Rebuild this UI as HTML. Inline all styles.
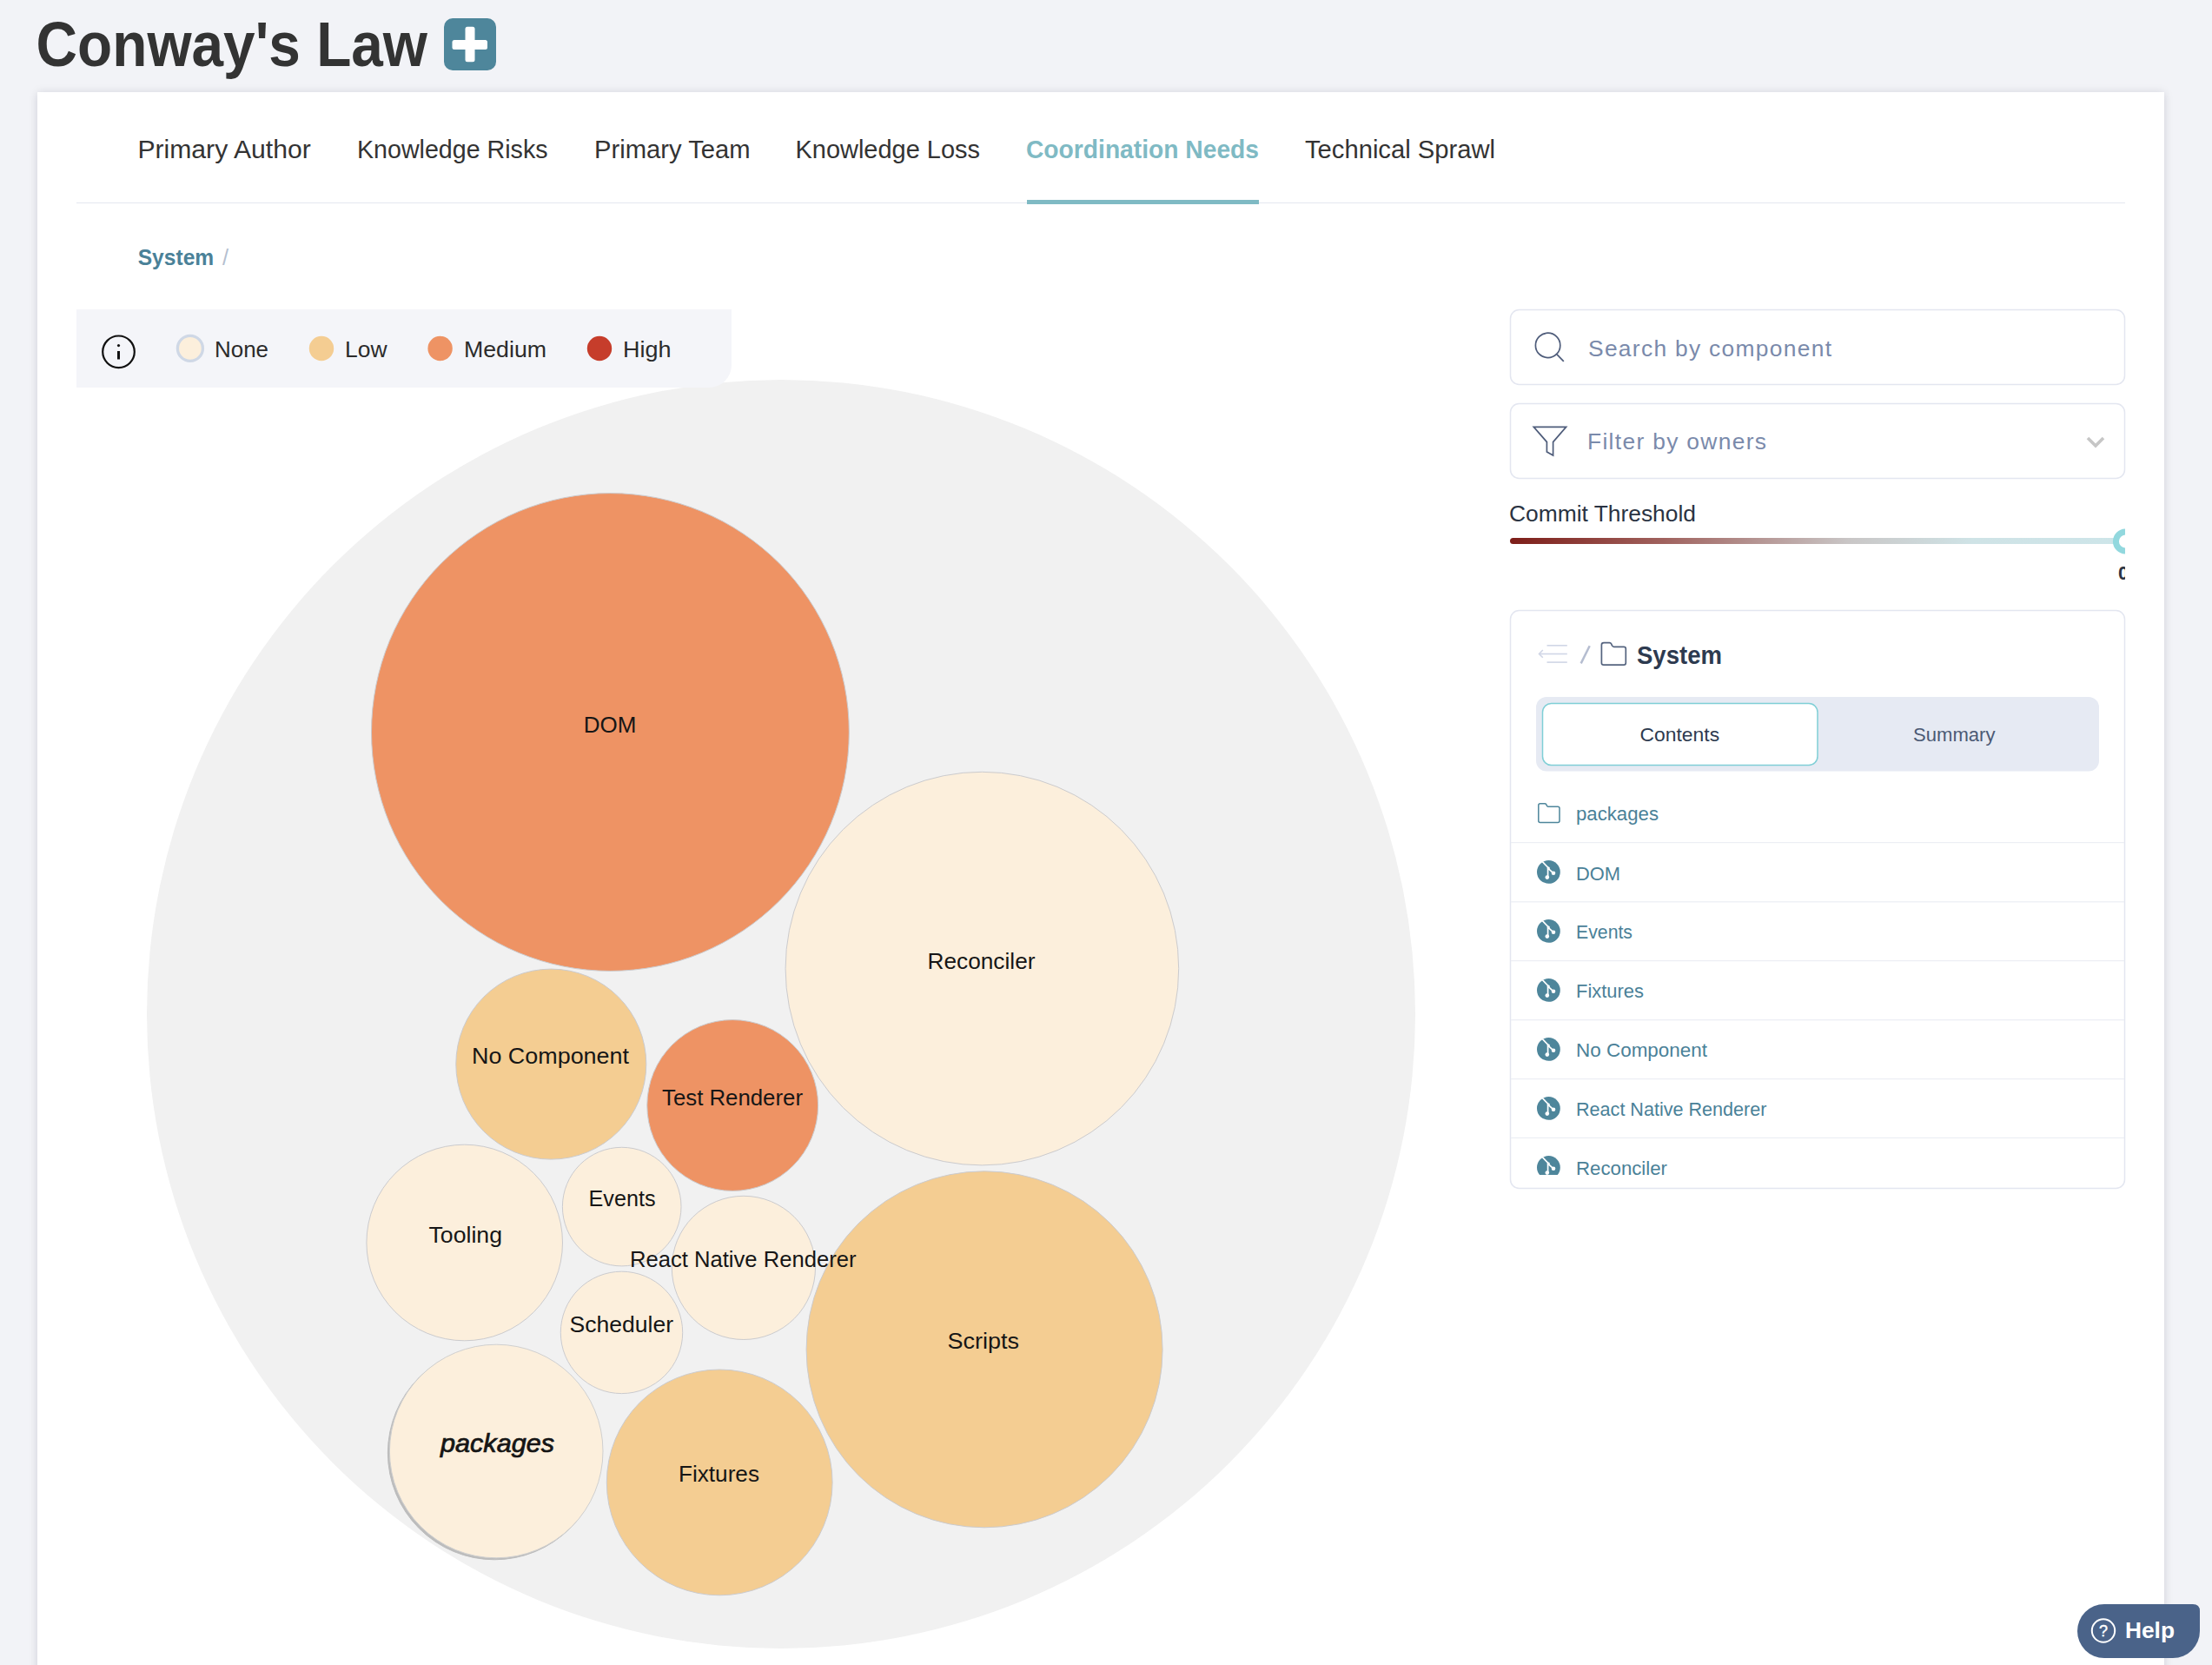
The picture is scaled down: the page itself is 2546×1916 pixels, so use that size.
<!DOCTYPE html>
<html><head><meta charset="utf-8"><title>Conway's Law</title>
<style>
html,body{margin:0;padding:0;width:2546px;height:1916px;overflow:hidden;background:#f2f3f7;font-family:"Liberation Sans",sans-serif;}
.card{position:absolute;left:43px;top:106px;width:2448px;height:1900px;background:#fff;box-shadow:0 1px 10px rgba(10,15,40,.15);}
svg{position:absolute;left:0;top:0;}
</style></head><body>
<div class="card"></div>
<svg width="2546" height="1916" viewBox="0 0 2546 1916" font-family="Liberation Sans, sans-serif">
<defs>
  <linearGradient id="trk" x1="0" x2="1" y1="0" y2="0">
    <stop offset="0" stop-color="#7d1d18"/>
    <stop offset="0.25" stop-color="#a0625e"/>
    <stop offset="0.55" stop-color="#c9c6c6"/>
    <stop offset="0.75" stop-color="#cfe3e6"/>
    <stop offset="1" stop-color="#cde5e9"/>
  </linearGradient>
  <clipPath id="rclip"><rect x="1700" y="560" width="746" height="120"/></clipPath>
  <clipPath id="listclip"><rect x="1738" y="900" width="708" height="452"/></clipPath>
  <filter id="pshadow" x="-10%" y="-10%" width="120%" height="120%">
    <feDropShadow dx="-2" dy="2" stdDeviation="0.5" flood-color="#bcbcbc" flood-opacity="1"/>
  </filter>
</defs>

<!-- Title -->
<text x="41.6" y="76.2" font-size="72.7" font-weight="700" fill="#333333" textLength="450.4" lengthAdjust="spacingAndGlyphs">Conway's Law</text>
<rect x="511" y="21" width="60" height="60" rx="10" fill="#4e869b"/>
<rect x="520.5" y="46" width="40.5" height="11" rx="2.5" fill="#fff"/>
<rect x="535.5" y="30.7" width="11" height="40.5" rx="2.5" fill="#fff"/>

<!-- Tabs -->
<g font-size="28.8" fill="#333333">
  <text x="158.4" y="182" textLength="199.4" lengthAdjust="spacingAndGlyphs">Primary Author</text>
  <text x="411.0" y="182" textLength="219.5" lengthAdjust="spacingAndGlyphs">Knowledge Risks</text>
  <text x="684.0" y="182" textLength="179.6" lengthAdjust="spacingAndGlyphs">Primary Team</text>
  <text x="915.5" y="182" textLength="212.5" lengthAdjust="spacingAndGlyphs">Knowledge Loss</text>
  <text x="1181.0" y="182" textLength="268.0" lengthAdjust="spacingAndGlyphs" font-weight="700" fill="#7fbac4">Coordination Needs</text>
  <text x="1502.0" y="182" textLength="219.0" lengthAdjust="spacingAndGlyphs">Technical Sprawl</text>
</g>
<rect x="88" y="233" width="2358" height="1" fill="#e4e8f0"/>
<rect x="1182" y="230" width="267" height="5" fill="#7fbac4"/>

<!-- Breadcrumb -->
<text x="158.7" y="304.7" font-size="25.4" font-weight="700" fill="#4a8198" textLength="87.5" lengthAdjust="spacingAndGlyphs">System</text>
<text x="256.0" y="304.7" font-size="25.4" fill="#b5bfd0">/</text>

<!-- Chart -->
<circle cx="899" cy="1167" r="730" fill="#f1f1f1"/>
<g stroke="#cbcbce" stroke-width="1">
  <circle cx="702.4" cy="842.5" r="274.9" fill="#ee9364"/>
  <circle cx="1130.4" cy="1114.6" r="226.3" fill="#fcefdc"/>
  <circle cx="634.3" cy="1224.6" r="109.5" fill="#f4cd92"/>
  <circle cx="843.2" cy="1272" r="98.4" fill="#ee9364"/>
  <circle cx="534.7" cy="1430" r="112.8" fill="#fcefdc"/>
  <circle cx="715.7" cy="1388.6" r="68.3" fill="#fcefdc"/>
  <circle cx="855.9" cy="1458.9" r="82.6" fill="#fcefdc"/>
  <circle cx="715.5" cy="1533.4" r="70.2" fill="#fcefdc"/>
  <circle cx="828.2" cy="1705.9" r="129.9" fill="#f4cd92"/>
  <circle cx="1133.1" cy="1552.8" r="205" fill="#f4cd92"/>
  <circle cx="571.2" cy="1670" r="122.8" fill="#fcefdc" stroke="#cfcfcf" stroke-width="1" filter="url(#pshadow)"/>
</g>
<g font-size="26.5" fill="#161616">
  <text x="671.7" y="842.8" textLength="60.6" lengthAdjust="spacingAndGlyphs">DOM</text>
  <text x="1067.5" y="1115.3" textLength="124.0" lengthAdjust="spacingAndGlyphs">Reconciler</text>
  <text x="543.0" y="1224.4" textLength="181.0" lengthAdjust="spacingAndGlyphs">No Component</text>
  <text x="762.0" y="1271.5" textLength="162.0" lengthAdjust="spacingAndGlyphs">Test Renderer</text>
  <text x="677.5" y="1388.3" textLength="77.0" lengthAdjust="spacingAndGlyphs">Events</text>
  <text x="725.0" y="1458.2" textLength="260.5" lengthAdjust="spacingAndGlyphs">React Native Renderer</text>
  <text x="493.5" y="1429.8" textLength="84.5" lengthAdjust="spacingAndGlyphs">Tooling</text>
  <text x="655.5" y="1533.3" textLength="119.5" lengthAdjust="spacingAndGlyphs">Scheduler</text>
  <text x="781.0" y="1704.8" textLength="93.0" lengthAdjust="spacingAndGlyphs">Fixtures</text>
  <text x="1090.5" y="1552.3" textLength="82.5" lengthAdjust="spacingAndGlyphs">Scripts</text>
  <text x="507.0" y="1670.6" font-size="30" font-weight="400" font-style="italic" stroke="#111" stroke-width="0.7" textLength="131.0" lengthAdjust="spacingAndGlyphs">packages</text>
</g>

<!-- Legend -->
<path d="M88 356 H842 V420 A26 26 0 0 1 816 446 H88 Z" fill="#f4f5f9"/>
<circle cx="136.5" cy="404.8" r="18.3" fill="none" stroke="#111" stroke-width="2.2"/>
<circle cx="136.5" cy="397.6" r="1.6" fill="#111"/>
<rect x="135" y="404" width="3" height="9.5" fill="#111"/>
<circle cx="218.9" cy="400.9" r="14.5" fill="#fcefdc" stroke="#cfd8e6" stroke-width="3.3"/>
<circle cx="370" cy="401" r="14.2" fill="#f4cd92"/>
<circle cx="506.6" cy="401" r="14.2" fill="#ee9364"/>
<circle cx="690" cy="401" r="14.2" fill="#c63d2b"/>
<g font-size="25" fill="#2b2b2b">
  <text x="247.0" y="411" textLength="62.0" lengthAdjust="spacingAndGlyphs">None</text>
  <text x="397.0" y="411" textLength="48.5" lengthAdjust="spacingAndGlyphs">Low</text>
  <text x="534.0" y="411" textLength="95.0" lengthAdjust="spacingAndGlyphs">Medium</text>
  <text x="717.0" y="411" textLength="55.5" lengthAdjust="spacingAndGlyphs">High</text>
</g>

<!-- Right panel: search -->
<rect x="1738.5" y="356.5" width="707" height="86" rx="10" fill="#fff" stroke="#e3e6f0" stroke-width="1.5"/>
<circle cx="1781.6" cy="397.4" r="14.2" fill="none" stroke="#4e5c7a" stroke-width="1.7"/>
<line x1="1791.8" y1="407.6" x2="1799.8" y2="415.9" stroke="#4e5c7a" stroke-width="1.7"/>
<text x="1828.0" y="409.9" font-size="26.4" fill="#7a8aab" textLength="280.0" lengthAdjust="spacing">Search by component</text>

<rect x="1738.5" y="464.5" width="707" height="86" rx="10" fill="#fff" stroke="#e3e6f0" stroke-width="1.5"/>
<path d="M1765.3 491.4 H1802.6 L1787.6 508.6 V524 L1780.4 520 V508.6 Z" fill="none" stroke="#4e5c7a" stroke-width="1.7" stroke-linejoin="miter"/>
<text x="1827.0" y="517.4" font-size="26.4" fill="#7a8aab" textLength="206.0" lengthAdjust="spacing">Filter by owners</text>
<polyline points="2403,504 2412,513 2421,504" fill="none" stroke="#c6c6c6" stroke-width="3.6"/>

<text x="1737.0" y="599.9" font-size="25.4" fill="#2a3342" textLength="215.0" lengthAdjust="spacingAndGlyphs">Commit Threshold</text>
<rect x="1738" y="619" width="708" height="7" rx="3.5" fill="url(#trk)"/>
<g clip-path="url(#rclip)">
  <circle cx="2446.5" cy="623" r="11.1" fill="#fff" stroke="#92d8de" stroke-width="7"/>
  <text x="2438" y="667" font-size="22" font-weight="700" fill="#2a3342">0</text>
</g>

<!-- Tree panel -->
<rect x="1738.5" y="702.5" width="707" height="665" rx="10" fill="#fff" stroke="#e3e6f0" stroke-width="1.5"/>
<g stroke="#d0d6e6" stroke-width="1.6" fill="none">
  <line x1="1780.5" y1="742.8" x2="1803.8" y2="742.8"/>
  <line x1="1772" y1="752.5" x2="1803.8" y2="752.5"/>
  <line x1="1780.5" y1="762.1" x2="1803.8" y2="762.1"/>
  <polyline points="1775.8,748 1771.5,752.5 1775.8,756.8"/>
</g>
<line x1="1829.7" y1="743.3" x2="1819.7" y2="763.4" stroke="#b5bdd0" stroke-width="2.5"/>
<path d="M1843.4 763 V742 Q1843.4 739.6 1846 739.6 H1852.5 Q1854 739.6 1854.6 741 L1855.6 743 Q1856.2 744.3 1857.6 744.3 H1869 Q1871.3 744.3 1871.3 746.6 V762.8 Q1871.3 765.2 1869 765.2 H1845.8 Q1843.4 765.2 1843.4 763 Z" fill="none" stroke="#55647f" stroke-width="1.7"/>
<text x="1884.0" y="764" font-size="29" font-weight="700" fill="#2d3a4f" textLength="98.0" lengthAdjust="spacingAndGlyphs">System</text>

<rect x="1768" y="802" width="648" height="85.4" rx="12" fill="#e6eaf3"/>
<rect x="1775.5" y="809.5" width="316.5" height="71" rx="10" fill="#fff" stroke="#7fcfd6" stroke-width="1.5"/>
<text x="1887.5" y="852.8" font-size="22" fill="#2d3a4f" textLength="91.6" lengthAdjust="spacingAndGlyphs">Contents</text>
<text x="2202.0" y="852.8" font-size="22" fill="#4c5a75" textLength="94.5" lengthAdjust="spacingAndGlyphs">Summary</text>

<!-- list -->
<path d="M1770.8 944.5 V926.8 Q1770.8 924.7 1772.8 924.7 H1778 Q1779.2 924.7 1779.8 925.8 L1780.6 927.3 Q1781.1 928.3 1782.2 928.3 H1793 Q1795 928.3 1795 930.3 V944.5 Q1795 946.5 1793 946.5 H1772.8 Q1770.8 946.5 1770.8 944.5 Z" fill="none" stroke="#4e869b" stroke-width="1.5"/>
<text x="1814.0" y="944.3" font-size="22.2" fill="#4a8198" textLength="95.0" lengthAdjust="spacingAndGlyphs">packages</text>
<g fill="#eceef4">
  <rect x="1739" y="969" width="706" height="1.2"/>
  <rect x="1739" y="1037.2" width="706" height="1.2"/>
  <rect x="1739" y="1105" width="706" height="1.2"/>
  <rect x="1739" y="1173.1" width="706" height="1.2"/>
  <rect x="1739" y="1241" width="706" height="1.2"/>
  <rect x="1739" y="1308.8" width="706" height="1.2"/>
</g>
<g clip-path="url(#listclip)">
  <g>
    <circle cx="1782.4" cy="1003.4" r="13.4" fill="#4e869b"/>
    <path d="M1775.2 991.4 L1781.6 998.2 V1009 M1782 999.4 L1788 1004.8" stroke="#fff" stroke-width="1.7" fill="none"/>
    <circle cx="1782.3" cy="999" r="1.6" fill="#fff"/>
    <circle cx="1780.8" cy="1009.6" r="2.3" fill="#fff"/>
    <circle cx="1788" cy="1004.8" r="2.3" fill="#fff"/>
  </g>
  <g transform="translate(0,68)">
    <circle cx="1782.4" cy="1003.4" r="13.4" fill="#4e869b"/>
    <path d="M1775.2 991.4 L1781.6 998.2 V1009 M1782 999.4 L1788 1004.8" stroke="#fff" stroke-width="1.7" fill="none"/>
    <circle cx="1782.3" cy="999" r="1.6" fill="#fff"/>
    <circle cx="1780.8" cy="1009.6" r="2.3" fill="#fff"/>
    <circle cx="1788" cy="1004.8" r="2.3" fill="#fff"/>
  </g>
  <g transform="translate(0,136)">
    <circle cx="1782.4" cy="1003.4" r="13.4" fill="#4e869b"/>
    <path d="M1775.2 991.4 L1781.6 998.2 V1009 M1782 999.4 L1788 1004.8" stroke="#fff" stroke-width="1.7" fill="none"/>
    <circle cx="1782.3" cy="999" r="1.6" fill="#fff"/>
    <circle cx="1780.8" cy="1009.6" r="2.3" fill="#fff"/>
    <circle cx="1788" cy="1004.8" r="2.3" fill="#fff"/>
  </g>
  <g transform="translate(0,204)">
    <circle cx="1782.4" cy="1003.4" r="13.4" fill="#4e869b"/>
    <path d="M1775.2 991.4 L1781.6 998.2 V1009 M1782 999.4 L1788 1004.8" stroke="#fff" stroke-width="1.7" fill="none"/>
    <circle cx="1782.3" cy="999" r="1.6" fill="#fff"/>
    <circle cx="1780.8" cy="1009.6" r="2.3" fill="#fff"/>
    <circle cx="1788" cy="1004.8" r="2.3" fill="#fff"/>
  </g>
  <g transform="translate(0,272)">
    <circle cx="1782.4" cy="1003.4" r="13.4" fill="#4e869b"/>
    <path d="M1775.2 991.4 L1781.6 998.2 V1009 M1782 999.4 L1788 1004.8" stroke="#fff" stroke-width="1.7" fill="none"/>
    <circle cx="1782.3" cy="999" r="1.6" fill="#fff"/>
    <circle cx="1780.8" cy="1009.6" r="2.3" fill="#fff"/>
    <circle cx="1788" cy="1004.8" r="2.3" fill="#fff"/>
  </g>
  <g transform="translate(0,340)">
    <circle cx="1782.4" cy="1003.4" r="13.4" fill="#4e869b"/>
    <path d="M1775.2 991.4 L1781.6 998.2 V1009 M1782 999.4 L1788 1004.8" stroke="#fff" stroke-width="1.7" fill="none"/>
    <circle cx="1782.3" cy="999" r="1.6" fill="#fff"/>
    <circle cx="1780.8" cy="1009.6" r="2.3" fill="#fff"/>
    <circle cx="1788" cy="1004.8" r="2.3" fill="#fff"/>
  </g>
  <g font-size="22.2" fill="#4a8198">
    <text x="1814.0" y="1012.6" textLength="51.0" lengthAdjust="spacingAndGlyphs">DOM</text>
    <text x="1814.0" y="1080.4" textLength="65.0" lengthAdjust="spacingAndGlyphs">Events</text>
    <text x="1814.0" y="1148.2" textLength="78.0" lengthAdjust="spacingAndGlyphs">Fixtures</text>
    <text x="1814.0" y="1216" textLength="151.0" lengthAdjust="spacingAndGlyphs">No Component</text>
    <text x="1814.0" y="1283.8" textLength="219.5" lengthAdjust="spacingAndGlyphs">React Native Renderer</text>
    <text x="1814.0" y="1351.7" textLength="105.0" lengthAdjust="spacingAndGlyphs">Reconciler</text>
  </g>
</g>

<!-- Help -->
<path d="M2422 1846 H2524 Q2532 1846 2532 1854 V1877 A31 31 0 0 1 2501 1908 H2422 A31 31 0 0 1 2422 1846 Z" fill="#4a6389"/>
<circle cx="2421" cy="1876.5" r="13.2" fill="none" stroke="#fff" stroke-width="2"/>
<text x="2421" y="1883" font-size="18" font-weight="400" fill="#fff" text-anchor="middle" stroke="#fff" stroke-width="0.4">?</text>
<text x="2446.0" y="1884.7" font-size="26" font-weight="700" fill="#fff" textLength="57.0" lengthAdjust="spacingAndGlyphs">Help</text>
</svg>
</body></html>
